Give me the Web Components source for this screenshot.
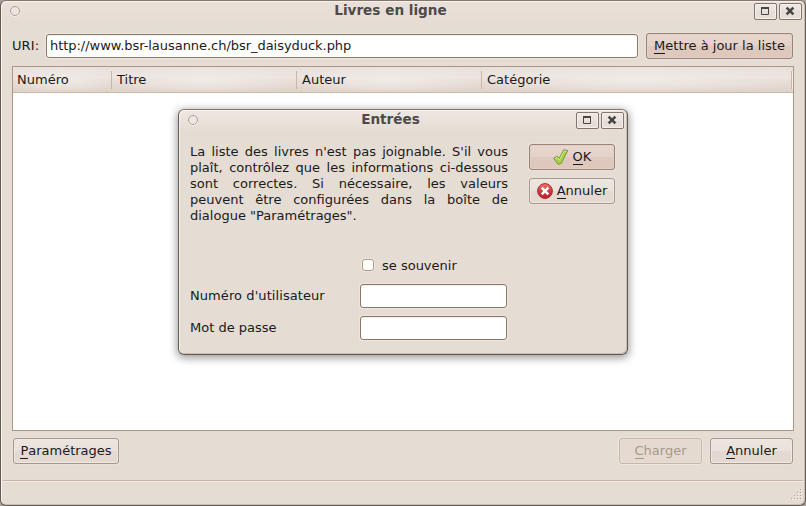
<!DOCTYPE html>
<html lang="fr"><head><meta charset="utf-8"><title>Livres en ligne</title>
<style>
html,body{margin:0;height:506px;overflow:hidden}
body{background:#aaa29b;font:13px/16px "DejaVu Sans",sans-serif;color:#1a1a1a}
</style></head><body>
<library-app></library-app>
<script>
const define=(name,html,setup)=>customElements.define(name,class extends HTMLElement{
  constructor(){super();const t=document.createElement('template');t.innerHTML=html;
    this.attachShadow({mode:'open'}).append(t.content.cloneNode(true));}
  connectedCallback(){if(setup)setup(this,this.shadowRoot);}
});

/* Window frame: title bar with menu dot and two controls */
define('app-window',`<style>
:host{display:flex;flex-direction:column;box-sizing:border-box;border:1px solid #645b54;border-top-color:#85766d;border-radius:6px;
 background:linear-gradient(var(--top,#eae0da),#e5dcd3 22px,#e5dcd3);box-shadow:inset 1px 1px #f8f2ed,inset -1px -1px #c9beb4,var(--shadow,0 0 transparent)}
header{display:grid;grid-template-columns:26px 1fr 51px;height:21px;flex:none}
i{box-sizing:border-box;width:10px;height:10px;border:1px solid #aaa097;border-radius:50%;margin:5px 0 0 9px;background:#eee7e1;box-shadow:0 1px #f7f2ee}
h1{margin:1px 0 0;font:bold 13.6px/17px "DejaVu Sans",sans-serif;color:#4d4b49;text-align:center;white-space:nowrap}
nav{display:flex;gap:2px;justify-content:flex-end;padding:2px 3px 0 0}
nav span{box-sizing:border-box;width:23px;height:17px;border:1px solid #81766e;border-radius:2px;background:linear-gradient(#efe9e4,#e9e1db 50%,#e5dcd5 50%,#e8dfd8);box-shadow:inset 0 0 0 1px #f4efeb}
svg{display:block}
</style><header><i></i><h1></h1><nav>
<span><svg width="21" height="15"><path d="M6.5 3.5h7v7h-7z" fill="none" stroke="#494745"/><path d="M6 4h8" stroke="#494745" stroke-width="2"/></svg></span>
<span><svg width="21" height="15"><path d="M6.6 3.6l6.8 6.8m0-6.8l-6.8 6.8" stroke="#494745" stroke-width="2.6"/></svg></span></nav></header><slot></slot>`,
(h,r)=>r.querySelector('h1').textContent=h.getAttribute('heading'));

define('push-button',`<style>
:host{display:flex;box-sizing:border-box;height:26px;align-items:center;justify-content:center;gap:4px;border:1px solid #a59789;border-radius:3px;
 background:linear-gradient(#ede5df,#e9e1db 50%,#e3d9d2 50%,#e4dad2);box-shadow:inset 0 0 0 1px #f0e9e3,0 0 0 1px #e9e1d9;white-space:nowrap}
:host([primary]){border-color:#998477;background:linear-gradient(#e8d7ce,#e4d2c9 50%,#dfc9be 50%,#dec7bb);box-shadow:inset 0 0 0 1px #e3cfc4,0 0 0 1px #e9e1d9}
:host([disabled]){color:#aa9885;border-color:#c6b6a8;background:#e5dad1;box-shadow:inset 0 0 0 1px #e7ddd5,0 0 0 1px #ede6df}
u{text-decoration:none;display:inline-block;height:14px;line-height:14px;border-bottom:1px solid}
.t{line-height:16px;height:16px}
</style><slot name="icon"></slot><span class="t"><u></u><span></span></span>`,
(h,r)=>{const s=h.getAttribute('label');r.querySelector('u').textContent=s[0];r.querySelector('.t span').textContent=s.slice(1);});

define('text-field',`<style>
:host{display:block;box-sizing:border-box;height:24px;border:1px solid #8b7766;border-radius:3px;background:#fff;padding:3px 3px;box-shadow:0 0 0 1px #efe7df,inset 0 1px #f1efeb;white-space:nowrap}
</style><slot></slot>`);

define('check-box',`<style>
:host{display:flex;align-items:center;gap:8px}
b{box-sizing:border-box;width:12px;height:12px;border:1px solid #b19a86;border-radius:3px;background:#fff;box-shadow:0 0 0 1px #eee5dd}
span{padding-top:2px}
</style><b></b><span><slot></slot></span>`);

define('column-head',`<style>
:host{display:block;box-sizing:border-box;height:25px;padding:5px 0 0 4px;position:relative;background:radial-gradient(ellipse 60% 60% at 50% 50%,#f0ebe7,#e9e0da00),linear-gradient(#e9e0da,#ebe3de 50%,#e6ddd6 50%,#dfd2c9)}
:host::after{content:"";position:absolute;right:0;top:4px;width:1px;height:18px;background:#c9b8a9;box-shadow:1px 0 #f6f1ed}
</style><slot></slot>`);

define('book-table',`<style>
:host{display:block;box-sizing:border-box;border:1px solid #ae9685;background:#fff}
div{display:grid;grid-template-columns:99px 185px 185px 1fr;border-bottom:1px solid #cbb8a9;padding-right:1px;background:#e5dbd4}
column-head+column-head{padding-left:5px}
</style><div><column-head>Numéro</column-head><column-head>Titre</column-head><column-head>Auteur</column-head><column-head>Catégorie</column-head></div>`);

define('status-bar',`<style>
:host{display:flex;justify-content:flex-end;align-items:flex-end;box-sizing:border-box;height:24px;margin:0 2px;border-top:1px solid #c7b6a7;box-shadow:inset 0 1px #f3ece6}
svg{margin:0 1px 3px 0}
</style><svg width="12" height="12"></svg>`,
(h,r)=>{let s='';for(let a=0;a<4;a++)for(let b=0;b<=a;b++){const x=10-b*3,y=1+a*3;
 s+='<path d="M'+x+' '+(y-.5)+'h1" stroke="#b5a597"/><path d="M'+(x+1)+' '+(y+.5)+'h1" stroke="#f8f4f0"/>';}
 r.querySelector('svg').innerHTML=s;});

define('login-dialog',`<style>
:host{display:block}
app-window{height:246px;--top:#eee7e2;--shadow:0 2px 9px 1px rgba(0,0,0,.4)}
main{display:grid;grid-template-columns:318px 86px;column-gap:21px;padding:13px 0 0 11px}
p{margin:0;text-align:justify;height:114px}
.actions{display:grid;gap:8px;align-content:start}
.form{display:grid;grid-template-columns:170px 147px;row-gap:8px;align-items:center}
.wide{letter-spacing:.08px}
check-box{margin:-1px 0 3px 2px;height:16px}
</style><app-window heading="Entrées"><main>
<p>La liste des livres n'est pas joignable. S'il vous plaît, contrôlez que les informations ci-dessous sont correctes. Si nécessaire, les valeurs peuvent être configurées dans la boîte de dialogue "Paramétrages".</p>
<div class="actions"><push-button primary label="OK"><svg slot="icon" width="16" height="16" viewBox="0 0 16 16"><path d="M.6 9.4L4.2 7.2l2 2.2L10.7.8l4.1.8L8.2 14.4l-3 1z" fill="#a9cf48" stroke="#75993e" stroke-linejoin="round"/><path d="M2.1 9.7l1.9-1.2 2.4 2.7L11.3 2l2 .4" fill="none" stroke="#d3ea88"/></svg></push-button>
<push-button label="Annuler"><svg slot="icon" width="16" height="16" viewBox="0 0 16 16"><defs><linearGradient id="r" x2="0" y2="1"><stop stop-color="#ec7b72"/><stop offset=".5" stop-color="#d33b3b"/><stop offset="1" stop-color="#c01e2b"/></linearGradient></defs><circle cx="8" cy="8" r="7.4" fill="url(#r)" stroke="#a92630"/><path d="M4.7 4.7l6.6 6.6m0-6.6l-6.6 6.6" stroke="#fff" stroke-width="2.6"/></svg></push-button></div>
<div class="form"><span></span><check-box>se souvenir</check-box><span class="wide">Numéro d'utilisateur</span><text-field></text-field><span>Mot de passe</span><text-field></text-field></div>
</main></app-window>`);

define('library-app',`<style>
:host{display:block;position:relative;width:806px;height:506px}
.main{height:506px}
.uri{display:grid;grid-template-columns:34px 592px 147px;align-items:center;margin:11px 0 7px 11px}
.uri span{letter-spacing:.1px}
.uri text-field{letter-spacing:-.04px}
.uri push-button{margin-left:8px;width:147px}
book-table{width:782px;height:365px;margin-left:11px}
footer{display:flex;margin:7px 12px 16px 12px;gap:8px}
.sp{flex:1}
login-dialog{position:absolute;left:178px;top:109px;width:450px}
</style>
<app-window class="main" heading="Livres en ligne">
<div class="uri"><span>URI:</span><text-field>http://www.bsr-lausanne.ch/bsr_daisyduck.php</text-field><push-button primary label="Mettre à jour la liste"></push-button></div>
<book-table></book-table>
<footer><push-button style="width:106px" label="Paramétrages"></push-button><span class="sp"></span><push-button style="width:83px" disabled label="Charger"></push-button><push-button style="width:83px" label="Annuler"></push-button></footer>
<status-bar></status-bar></app-window>
<login-dialog></login-dialog>`);
</script></body></html>
